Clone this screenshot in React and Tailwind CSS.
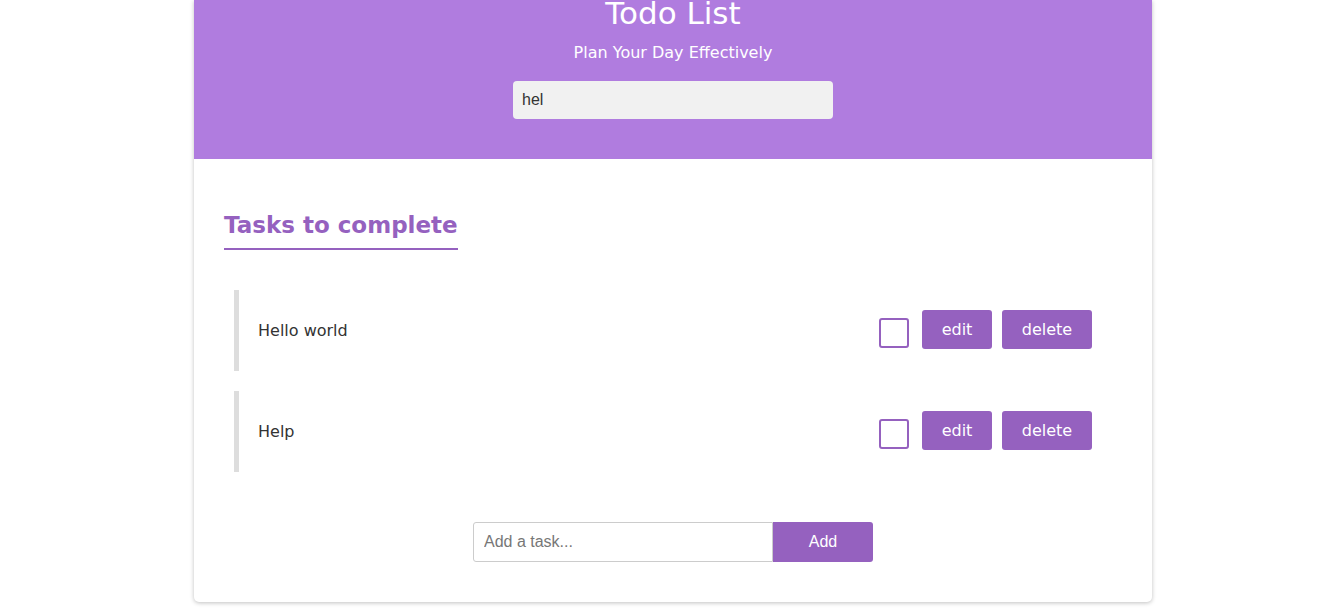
import React, { useState } from 'react';

const tasks = ['Hello world', 'Help'];

const TaskRow = ({ text }) => (
  <div className="flex items-center h-[81px] border-l-[5px] border-[#dddddd] pl-[19px]">
    <p className="grow text-[16px] text-[#333333] mt-[1px]">{text}</p>
    <div className="flex items-center -mt-[2px]">
      <div className="w-[30px] h-[30px] border-2 border-[#9561bf] rounded-[3px] bg-white mr-[13px] mt-[7px]"></div>
      <button className="w-[70px] h-[39px] bg-[#9561bf] text-white text-[16px] rounded-[3px] mr-[10px]">
        edit
      </button>
      <button className="w-[90px] h-[39px] bg-[#9561bf] text-white text-[16px] rounded-[3px]">
        delete
      </button>
    </div>
  </div>
);

export default function App() {
  const [search, setSearch] = useState('hel');
  const [task, setTask] = useState('');

  return (
    <div
      className="min-h-[612px] bg-white flex justify-center pl-[6px]"
      style={{ fontFamily: '"DejaVu Sans", Verdana, sans-serif' }}
    >
      <div className="w-[958px] h-[602px] bg-white rounded-b-[5px] shadow-[0_1px_4px_rgba(0,0,0,0.25)] overflow-hidden">
        <header className="bg-[#b07cdf] h-[159px] flex flex-col items-center">
          <h1 className="text-white text-[31px] leading-[28px] -mt-[1px]">Todo List</h1>
          <p className="text-white text-[16px] mt-[14px]">Plan Your Day Effectively</p>
          <input
            value={search}
            onChange={(e) => setSearch(e.target.value)}
            className="mt-[16px] w-[320px] h-[38px] bg-[#f1f1f1] rounded-[4px] px-[9px] text-[16px] text-[#333] outline-none"
            style={{ fontFamily: '"Liberation Sans", Arial, sans-serif' }}
          />
        </header>
        <section className="pt-[51px] px-[30px]">
          <h2 className="inline-block text-[23px] font-bold text-[#9561bf] pb-[8px] border-b-2 border-[#9561bf] leading-[30px]">
            Tasks to complete
          </h2>
          <div className="mt-[40px] ml-[10px] mr-[30px] flex flex-col gap-[20px]">
            {tasks.map((t) => (
              <TaskRow key={t} text={t} />
            ))}
          </div>
          <form
            className="flex justify-center mt-[50px]"
            onSubmit={(e) => e.preventDefault()}
            style={{ fontFamily: '"Liberation Sans", Arial, sans-serif' }}
          >
            <input
              value={task}
              onChange={(e) => setTask(e.target.value)}
              placeholder="Add a task..."
              className="w-[300px] h-[40px] border border-[#cccccc] rounded-l-[3px] px-[10px] text-[16px] placeholder-[#777777] outline-none"
            />
            <button className="w-[100px] h-[40px] bg-[#9561bf] text-white text-[16px] rounded-r-[3px]">
              Add
            </button>
          </form>
        </section>
      </div>
    </div>
  );
}
